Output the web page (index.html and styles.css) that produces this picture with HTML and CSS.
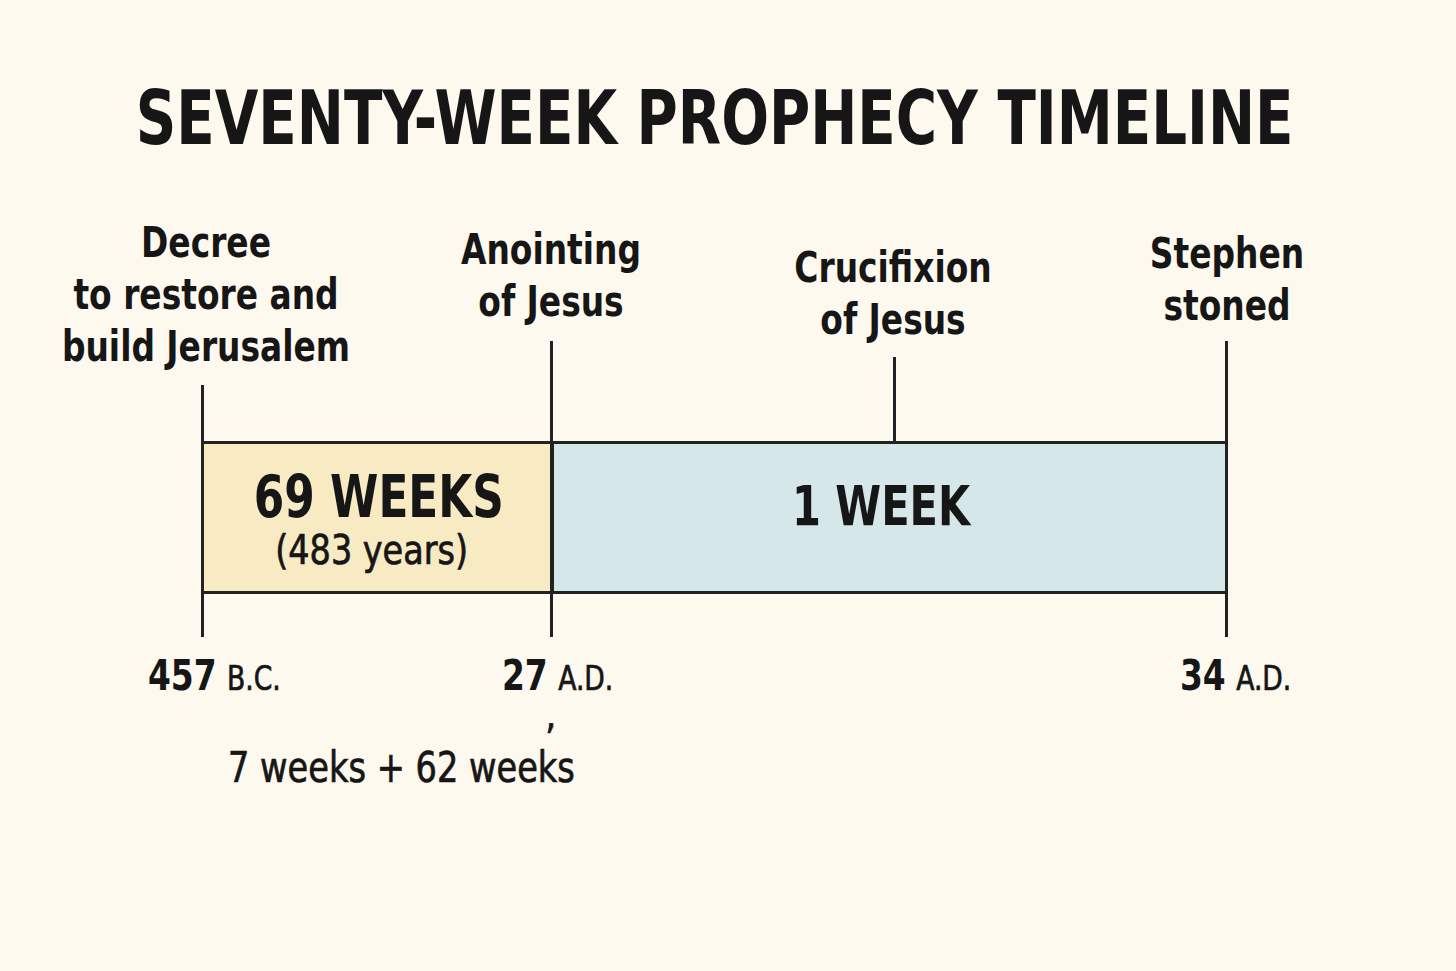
FILE: index.html
```html
<!DOCTYPE html>
<html lang="en">
<head>
<meta charset="utf-8">
<title>Seventy-Week Prophecy Timeline</title>
<link rel="stylesheet" href="styles.css">
</head>
<body>
<main class="page">
  <h1 class="title">SEVENTY-WEEK PROPHECY TIMELINE</h1>
  <section class="diagram">
    <div class="event ev-decree">Decree<br>to restore and<br>build Jerusalem</div>
    <div class="event ev-anoint">Anointing<br>of Jesus</div>
    <div class="event ev-cruc">Crucifixion<br>of Jesus</div>
    <div class="event ev-stephen">Stephen<br>stoned</div>

    <div class="bar">
      <div class="seg seg-69">
        <div class="seg-big">69 WEEKS</div>
        <div class="seg-small">(483 years)</div>
      </div>
      <div class="seg seg-1">
        <div class="seg-big seg-big-1">1 WEEK</div>
      </div>
    </div>

    <div class="tick tick-457"></div>
    <div class="tick tick-27"></div>
    <div class="tick tick-cruc"></div>
    <div class="tick tick-34"></div>

    <div class="date d-457"><b>457</b> <span>B.C.</span></div>
    <div class="date d-27"><b>27</b> <span>A.D.</span></div>
    <div class="date d-34"><b>34</b> <span>A.D.</span></div>

    <div class="comma">,</div>
    <div class="split">7 weeks + 62 weeks</div>
  </section>
</main>
</body>
</html>
```
FILE: styles.css
```css
html, body {
  margin: 0;
  padding: 0;
  background: #fdf9ef;
}
.page {
  width: 1456px;
  height: 971px;
  font-family: "DejaVu Sans Condensed", "DejaVu Sans", sans-serif;
  font-stretch: condensed;
  color: #161616;
  overflow: hidden;
}
.title {
  margin: 0;
  padding-top: 78px;
  padding-right: 32px;
  height: 200px;
  box-sizing: border-box;
  text-align: center;
  font-size: 75px;
  line-height: 80px;
  font-weight: bold;
  letter-spacing: 0;
  white-space: nowrap;
  transform: scaleX(0.834);
}
.diagram {
  position: relative;
  height: 771px;
}
.event {
  position: absolute;
  transform: translateX(-50%) scaleX(0.87);
  text-align: center;
  white-space: nowrap;
  font-size: 42px;
  line-height: 52px;
  font-weight: bold;
}
.ev-decree { left: 206px; top: 17px; }
.ev-anoint { left: 551px; top: 24px; }
.ev-cruc { left: 893px; top: 42px; }
.ev-stephen { left: 1227px; top: 28px; }

.bar {
  position: absolute;
  left: 201px;
  top: 241px;
  width: 1027px;
  height: 153px;
  box-sizing: border-box;
  border-top: 3px solid #222;
  border-bottom: 3px solid #222;
  display: flex;
}
.seg {
  display: flex;
  flex-direction: column;
  align-items: center;
  justify-content: center;
}
.seg-69 {
  width: 350px;
  background: #f8ebc4;
  padding-top: 4px;
}
.seg-1 {
  flex: 1;
  background: #d6e7ea;
  border-left: 3px solid #222;
  padding-bottom: 24px;
}
.seg-big {
  font-size: 58px;
  line-height: 60px;
  font-weight: bold;
  white-space: nowrap;
  margin-left: 6px;
  transform: scaleX(0.84);
}
.seg-big-1 {
  margin-left: -20px;
  font-size: 56px;
  transform: scaleX(0.825);
}
.seg-small {
  font-size: 40px;
  line-height: 46px;
  font-weight: normal;
  white-space: nowrap;
  margin-left: -8px;
  -webkit-text-stroke: 0.7px #161616;
  transform: scaleX(0.93);
}
.tick {
  position: absolute;
  width: 3px;
  background: #222;
}
.tick-457 { left: 201px; top: 185px; height: 252px; }
.tick-27 { left: 550px; top: 141px; height: 296px; }
.tick-cruc { left: 893px; top: 157px; height: 86px; }
.tick-34 { left: 1225px; top: 141px; height: 296px; }

.date {
  position: absolute;
  top: 452px;
  white-space: nowrap;
  font-size: 42px;
  line-height: 48px;
  transform: scaleX(0.87);
  transform-origin: left center;
}
.date b { font-weight: bold; }
.date span {
  font-size: 34px;
  font-weight: normal;
  -webkit-text-stroke: 0.7px #161616;
}
.d-457 { left: 148px; }
.d-27 { left: 502px; }
.d-34 { left: 1180px; }

.comma {
  position: absolute;
  left: 545px;
  top: 502px;
  font-size: 40px;
  line-height: 24px;
  -webkit-text-stroke: 0.5px #161616;
}
.split {
  position: absolute;
  left: 228px;
  top: 544px;
  white-space: nowrap;
  font-size: 42px;
  line-height: 48px;
  -webkit-text-stroke: 0.7px #161616;
  transform: scaleX(0.89);
  transform-origin: left center;
}
```
